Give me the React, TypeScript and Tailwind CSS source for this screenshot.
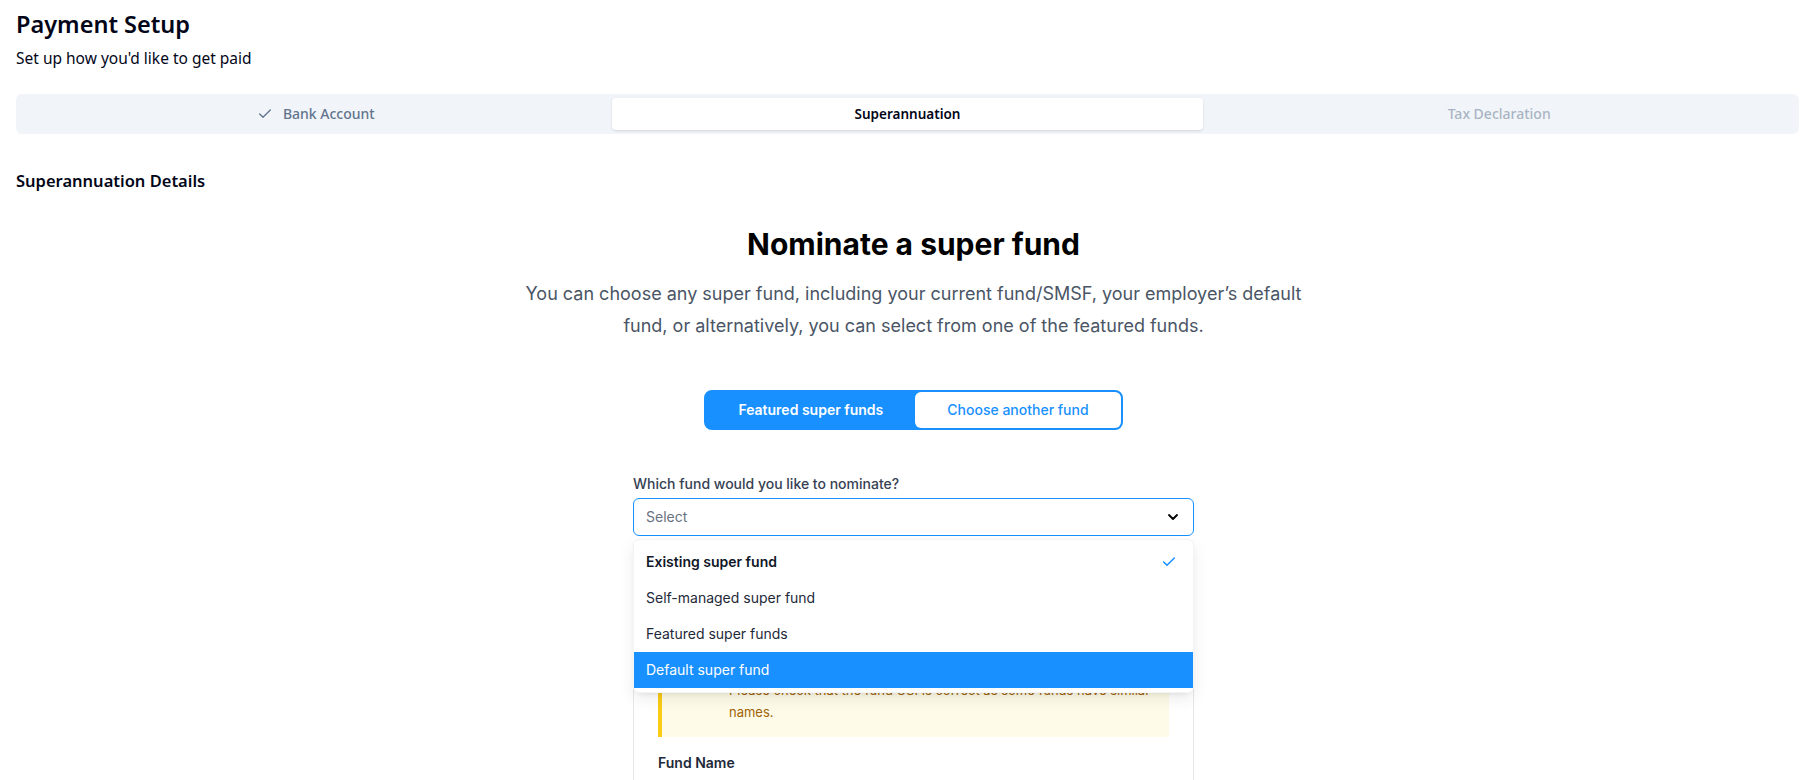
import React from "react";
import { Check, ChevronDown } from "lucide-react";

const tabs = [
  { label: "Bank Account", state: "done" },
  { label: "Superannuation", state: "active" },
  { label: "Tax Declaration", state: "disabled" },
];

const options = [
  { label: "Existing super fund", selected: true },
  { label: "Self-managed super fund" },
  { label: "Featured super funds" },
  { label: "Default super fund", highlighted: true },
];

export default function App() {
  return (
    <div className="min-h-screen bg-white pl-4 pr-[13px] pt-2 font-['Noto_Sans',sans-serif] text-slate-950">
      {/* Page header */}
      <h1 className="text-[23.5px] font-semibold leading-8">Payment Setup</h1>
      <p className="mt-2 text-[15.5px] leading-5">Set up how you'd like to get paid</p>

      {/* Steps */}
      <div className="mt-[26px] grid h-10 grid-cols-3 rounded-md bg-slate-100 p-1">
        {tabs.map((t) => (
          <div
            key={t.label}
            className={
              t.state === "active"
                ? "flex items-center justify-center rounded-sm bg-white text-[13.5px] font-semibold text-slate-950 shadow-sm"
                : t.state === "done"
                ? "flex items-center justify-center gap-2.5 text-sm font-medium text-slate-500"
                : "flex items-center justify-center text-sm font-medium text-slate-500 opacity-50"
            }
          >
            {t.state === "done" && <Check size={16} strokeWidth={2} />}
            {t.label}
          </div>
        ))}
      </div>

      <h2 className="mt-[35px] text-[16.5px] font-semibold leading-6">Superannuation Details</h2>

      {/* Nominate section */}
      <section className="flex flex-col items-center pl-3 font-['Inter',sans-serif]">
        <h3 className="mt-[33px] text-3xl font-bold leading-9 text-black">Nominate a super fund</h3>
        <p className="mt-4 max-w-[800px] text-center text-lg leading-8 text-gray-600">
          You can choose any super fund, including your current fund/SMSF, your employer’s default
          fund, or alternatively, you can select from one of the featured funds.
        </p>

        <div className="mt-12 flex h-10 rounded-lg border-2 border-[#1890ff] bg-[#1890ff]">
          <button className="px-8 text-sm font-semibold text-white">Featured super funds</button>
          <button className="rounded-md bg-white px-8 text-sm font-medium text-[#1890ff]">
            Choose another fund
          </button>
        </div>

        <div className="mt-11 w-[561px]">
          <label className="block text-sm font-medium leading-5 text-gray-700">
            Which fund would you like to nominate?
          </label>

          <div className="relative mt-1">
            <div className="flex h-[38px] items-center justify-between rounded-md border-[1.5px] border-[#1890ff] pl-3 pr-3">
              <span className="text-sm text-gray-500">Select</span>
              <ChevronDown size={16} strokeWidth={2.75} className="text-black" />
            </div>

            {/* Open menu */}
            <div className="absolute left-0 right-0 top-full z-10 mt-[3px] rounded-md border border-gray-100 bg-white py-1 shadow-[0_6px_16px_rgba(0,0,0,0.08),0_3px_6px_-4px_rgba(0,0,0,0.12)]">
              {options.map((o) => (
                <div
                  key={o.label}
                  className={
                    o.highlighted
                      ? "flex h-9 items-center bg-[#1890ff] px-3 text-sm text-white"
                      : o.selected
                      ? "flex h-9 items-center justify-between pl-3 pr-4 text-sm font-semibold text-gray-900"
                      : "flex h-9 items-center px-3 text-sm text-gray-800"
                  }
                >
                  {o.label}
                  {o.selected && <Check size={16} strokeWidth={2.25} className="text-[#1890ff]" />}
                </div>
              ))}
            </div>
          </div>

          {/* Fund card */}
          <div className="mt-6 rounded-md border border-gray-200 p-6">
            <div className="border-l-4 border-[#facc15] bg-[#fefce8] pb-3.5 pl-4 pr-2 pt-4 text-[13px] leading-[22px] text-[#a16207]">
              <p className="font-semibold">Before you continue</p>
              <ul className="mt-2 list-disc space-y-1 pl-[51px]">
                <li className="whitespace-nowrap">
                  Make sure the fund name matches the details shown on your latest
                  <br />
                  member statement.
                </li>
                <li className="whitespace-nowrap">
                  Please check that the fund USI is correct as some funds have similar
                  <br />
                  names.
                </li>
              </ul>
            </div>
            <p className="mt-4 text-sm font-semibold leading-5 text-gray-800">Fund Name</p>
            <div className="mt-2 h-[38px] rounded-md border border-gray-300" />
          </div>
        </div>
      </section>
    </div>
  );
}
